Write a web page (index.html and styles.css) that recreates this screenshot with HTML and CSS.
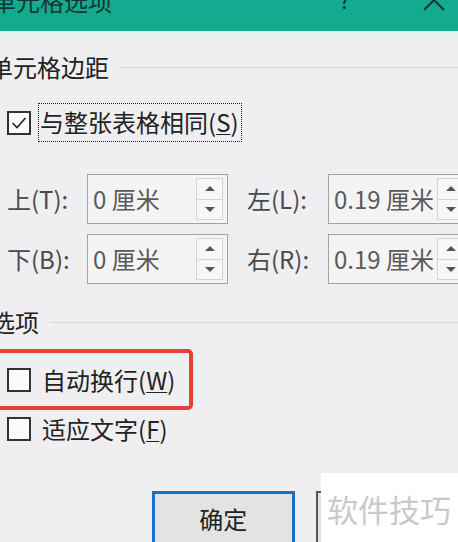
FILE: index.html
```html
<!DOCTYPE html>
<html lang="zh-CN">

<head>
    <meta charset="UTF-8">
    <title>单元格选项</title>
    <link rel="stylesheet" href="styles.css">
</head>

<body>
    <div class="dialog">
        <div class="titlebar">
            <span class="title">单元格选项</span>
            <span class="help">?</span>
            <span class="close">
                <svg width="24" height="24" viewBox="0 0 24 24">
                    <path d="M2 -10 L22 10 M22 -10 L2 10" stroke="#17352f" stroke-width="2" fill="none"/>
                </svg>
            </span>
        </div>
        <div class="titlebar-edge"></div>

        <div class="content">
            <div class="group-head first-head">
                <span class="head-text">单元格边距</span>
                <span class="rule"></span>
            </div>

            <div class="check-row same-row">
                <span class="checkbox">
                    <svg width="20" height="20" viewBox="0 0 20 20">
                        <polyline points="3.5,10 8,14.5 16.5,5" stroke="#222" stroke-width="1.6" fill="none"/>
                    </svg>
                </span>
                <span class="focus-label">与整张表格相同(<u>S</u>)</span>
            </div>

            <div class="margins">
                <span class="field-label">上(T):</span>
                <div class="spin">
                    <span class="spin-value">0 厘米</span>
                    <span class="spin-buttons"><b class="up"></b><b class="down"></b></span>
                </div>
                <span class="field-label">左(L):</span>
                <div class="spin">
                    <span class="spin-value">0.19 厘米</span>
                    <span class="spin-buttons"><b class="up"></b><b class="down"></b></span>
                </div>

                <span class="field-label">下(B):</span>
                <div class="spin">
                    <span class="spin-value">0 厘米</span>
                    <span class="spin-buttons"><b class="up"></b><b class="down"></b></span>
                </div>
                <span class="field-label">右(R):</span>
                <div class="spin">
                    <span class="spin-value">0.19 厘米</span>
                    <span class="spin-buttons"><b class="up"></b><b class="down"></b></span>
                </div>
            </div>

            <div class="group-head second-head">
                <span class="head-text">选项</span>
                <span class="rule"></span>
            </div>

            <div class="highlight-box">
                <div class="check-row">
                    <span class="checkbox"></span>
                    <span class="check-text">自动换行(<u>W</u>)</span>
                </div>
            </div>

            <div class="check-row fit-row">
                <span class="checkbox"></span>
                <span class="check-text">适应文字(<u>F</u>)</span>
            </div>

            <div class="buttons">
                <button class="btn btn-ok">确定</button>
                <button class="btn btn-cancel"></button>
            </div>
        </div>

        <div class="watermark">软件技巧</div>
    </div>
</body>

</html>
```

FILE: styles.css
```css
/* 对话框整体 */
body {
    margin: 0;
    font-family: "Noto Sans CJK SC", "Noto Sans", sans-serif;
    color: #222;
    background: #efeef1;
}

.dialog {
    position: relative;
    width: 458px;
    height: 542px;
    overflow: hidden;
    background: #efeef1;
}

/* 标题栏 */
.titlebar {
    height: 31px;
    background: #12ab8f;
    display: flex;
    align-items: flex-start;
    overflow: hidden;
}

.title {
    font-size: 24px;
    line-height: 24px;
    margin-top: -11px;
    margin-left: -8px;
    color: #17352f;
}

.help {
    font-size: 22px;
    line-height: 22px;
    margin-top: -12px;
    margin-left: auto;
    margin-right: 72px;
    color: #17352f;
}

.close {
    display: flex;
    margin-right: 12px;
}

.titlebar-edge {
    height: 2px;
    background: #d9f6f4;
}

/* 内容区 */
.content {
    display: flex;
    flex-direction: column;
}

.group-head {
    display: flex;
    align-items: center;
    gap: 11px;
    height: 26px;
}

.first-head {
    margin-top: 21px;
}

.second-head {
    margin-top: 25px;
}

.head-text {
    font-size: 24px;
    line-height: 26px;
    margin-left: -11px;
    white-space: nowrap;
}

.second-head .head-text {
    margin-left: -9px;
}

.rule {
    flex: 1;
    height: 1px;
    background: #d6d6d8;
}

/* 复选框 */
.check-row {
    display: flex;
    align-items: center;
    padding-left: 7px;
    font-size: 24px;
}

.checkbox {
    width: 24px;
    height: 24px;
    box-sizing: border-box;
    border: 2px solid #333;
    background: #fbfbfb;
    display: flex;
    align-items: center;
    justify-content: center;
    flex-shrink: 0;
}

.same-row {
    margin-top: 23px;
    height: 39px;
}

.focus-label {
    margin-left: 7px;
    height: 39px;
    box-sizing: border-box;
    border: 1px dotted #222;
    padding: 0 2px 0 1px;
    line-height: 36px;
    white-space: nowrap;
}

.check-text {
    margin-left: 11px;
    line-height: 30px;
    white-space: nowrap;
}

u {
    text-decoration-thickness: 1px;
    text-underline-offset: 2px;
}

/* 边距输入框 */
.margins {
    display: grid;
    grid-template-columns: 61px 141px 62px 141px;
    grid-auto-rows: 50px;
    column-gap: 19px;
    row-gap: 10px;
    padding-left: 7px;
    margin-top: 32px;
}

.field-label {
    font-size: 24px;
    color: #4a4a4a;
    line-height: 50px;
    white-space: nowrap;
}

.spin {
    display: flex;
    align-items: stretch;
    box-sizing: border-box;
    border: 1px solid #a3a3a3;
    background: #f4f4f4;
    padding: 3px 4px 3px 5px;
}

.spin-value {
    flex: 1;
    font-size: 24px;
    line-height: 42px;
    color: #5a5a5a;
    white-space: nowrap;
    overflow: hidden;
}

.spin-buttons {
    width: 27px;
    display: flex;
    flex-direction: column;
}

.spin-buttons b {
    flex: 1;
    box-sizing: border-box;
    border: 1px solid #d4d4d4;
    background: #f7f7f7;
    display: flex;
    align-items: center;
    justify-content: center;
}

.spin-buttons b + b {
    border-top: none;
}

.spin-buttons .up::before,
.spin-buttons .down::before {
    content: "";
    width: 0;
    height: 0;
    border-left: 5px solid transparent;
    border-right: 5px solid transparent;
}

.spin-buttons .up::before {
    border-bottom: 5px solid #555;
}

.spin-buttons .down::before {
    border-top: 5px solid #555;
}

/* 红框标注 */
.highlight-box {
    margin-top: 14px;
    margin-left: -10px;
    width: 203px;
    height: 61px;
    box-sizing: border-box;
    border: 4px solid #e5403c;
    border-radius: 5px;
    display: flex;
    align-items: center;
}

.highlight-box .check-row {
    padding-left: 13px;
}

.fit-row {
    margin-top: 4px;
}

/* 按钮 */
.buttons {
    display: flex;
    gap: 21px;
    padding-left: 152px;
    margin-top: 47px;
}

.btn {
    width: 146px;
    height: 58px;
    box-sizing: border-box;
    font-family: "Noto Sans CJK SC", sans-serif;
    font-size: 24px;
    color: #222;
    background: #e3e3e3;
    border: 3px solid #1c6fc4;
    padding: 0 0 3px;
}

.btn-cancel {
    border: 2px solid #555;
}

/* 水印 */
.watermark {
    position: absolute;
    left: 321px;
    top: 473px;
    width: 137px;
    height: 69px;
    background: #fff;
    box-sizing: border-box;
    padding: 3px 0 0 6px;
    font-size: 31px;
    line-height: 66px;
    color: #c9c9c9;
    white-space: nowrap;
}
```
